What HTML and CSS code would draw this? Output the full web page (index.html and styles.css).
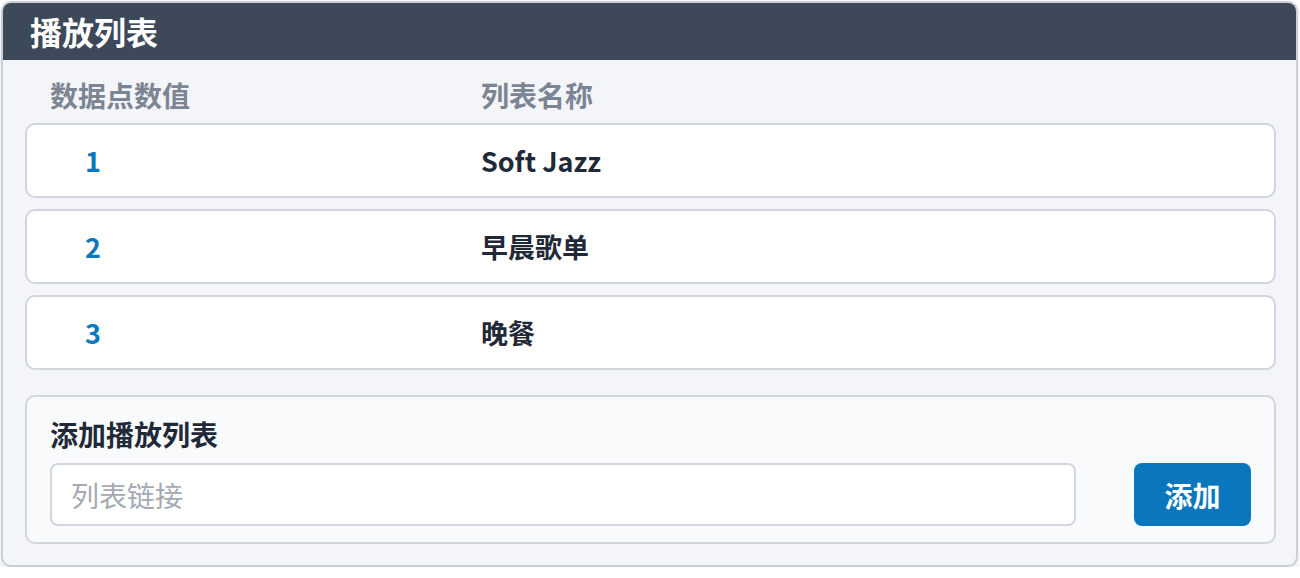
FILE: index.html
```html
<!DOCTYPE html>
<html lang="zh-CN">
<head>
    <meta charset="UTF-8">
    <meta name="viewport" content="width=device-width, initial-scale=1.0">
    <title>播放列表</title>
    <link rel="stylesheet" href="styles.css">
</head>
<body>
    <div class="panel">
        <div class="panel-header">播放列表</div>

        <div class="panel-body">
            <div class="list-head">
                <span class="col-num">数据点数值</span>
                <span class="col-name">列表名称</span>
            </div>

            <div class="list">
                <div class="list-row">
                    <span class="col-num">1</span>
                    <span class="col-name">Soft Jazz</span>
                </div>
                <div class="list-row">
                    <span class="col-num">2</span>
                    <span class="col-name">早晨歌单</span>
                </div>
                <div class="list-row">
                    <span class="col-num">3</span>
                    <span class="col-name">晚餐</span>
                </div>
            </div>

            <form class="add-box" id="add-form">
                <label for="list-url">添加播放列表</label>
                <div class="add-line">
                    <input type="text" id="list-url" placeholder="列表链接">
                    <button type="submit">添加</button>
                </div>
            </form>
        </div>
    </div>
</body>
</html>
```

FILE: styles.css
```css
body {
    margin: 0;
    padding: 1px 1px 0 1px;
    background: #ffffff;
    font-family: "Noto Sans CJK SC", "Noto Sans", sans-serif;
}
.panel {
    width: 1293px;
    border: 2px solid #c9cfd8;
    border-radius: 10px;
    background-color: #f3f5f8;
    box-shadow: 0 6px 12px rgba(0, 0, 0, 0.1);
    overflow: hidden;
}
.panel-header {
    height: 57px;
    line-height: 57px;
    padding-left: 27px;
    background-color: #3d4858;
    color: #ffffff;
    font-size: 32px;
    font-weight: 700;
}
.panel-body {
    padding: 18px 20px 21px 22px;
}
.list-head {
    display: flex;
    align-items: center;
    height: 34px;
    margin-bottom: 11px;
    padding-left: 25px;
    color: #7c8593;
    font-size: 28px;
    font-weight: 700;
}
.list-head .col-num {
    width: 431px;
}
.list {
    display: flex;
    flex-direction: column;
    gap: 11px;
}
.list-row {
    display: flex;
    align-items: center;
    height: 71px;
    padding-left: 58px;
    background-color: #ffffff;
    border: 2px solid #d1d6de;
    border-radius: 10px;
    font-size: 27px;
    font-weight: 700;
    color: #1f2937;
}
.list-row .col-num {
    width: 396px;
    color: #0b77bd;
}
.add-box {
    margin-top: 25px;
    padding: 21px 23px 16px 23px;
    background-color: #f8fafc;
    border: 2px solid #d1d6de;
    border-radius: 10px;
}
.add-box label {
    display: block;
    line-height: 32px;
    margin-bottom: 13px;
    font-size: 28px;
    font-weight: 700;
    color: #1f2937;
}
.add-line {
    display: flex;
    gap: 58px;
}
input {
    flex: 1;
    height: 63px;
    box-sizing: border-box;
    padding: 0 19px;
    border: 2px solid #d1d6de;
    border-radius: 8px;
    background-color: #ffffff;
    font-family: inherit;
    font-size: 28px;
    color: #1f2937;
}
input::placeholder {
    color: #a4aab3;
}
input:focus {
    outline: none;
    border-color: #0b77bd;
}
button {
    width: 117px;
    height: 63px;
    border: none;
    border-radius: 8px;
    background-color: #0a76bd;
    color: #ffffff;
    font-family: inherit;
    font-size: 28px;
    font-weight: 700;
    cursor: pointer;
}
```
